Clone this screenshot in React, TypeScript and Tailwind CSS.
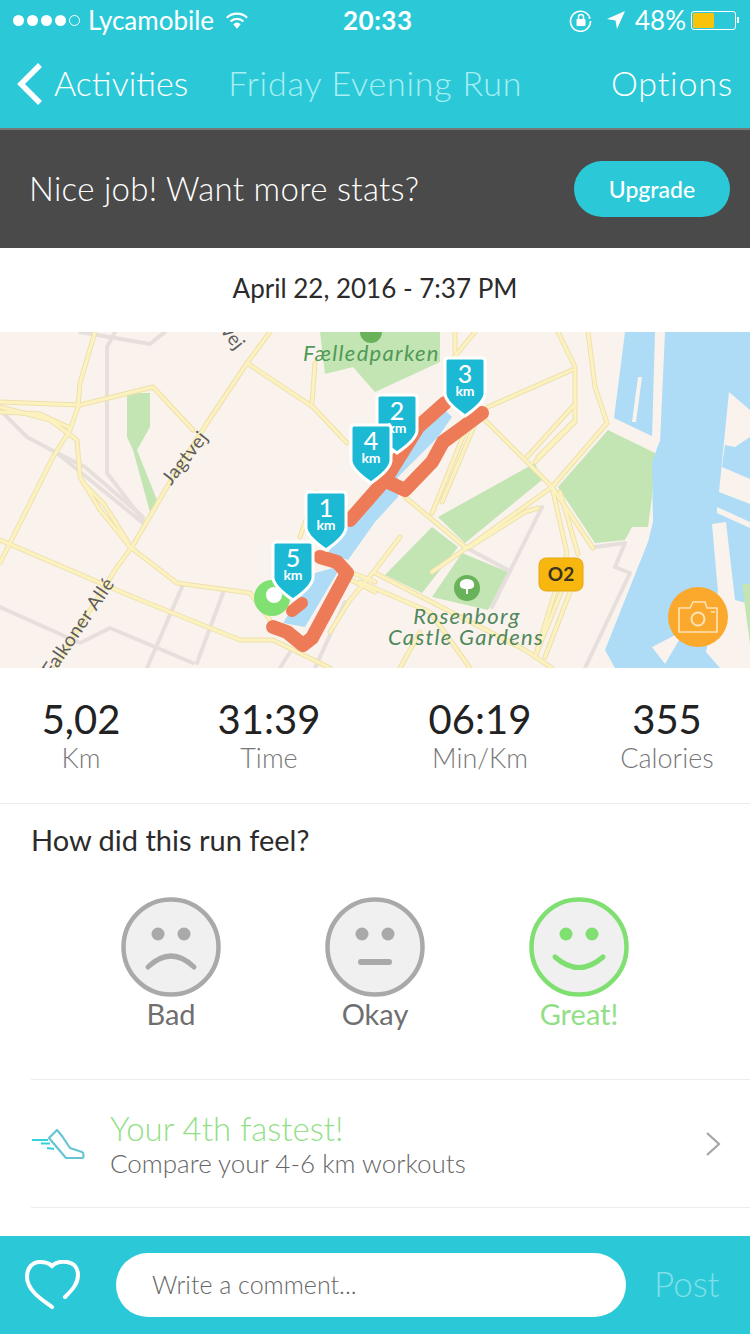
import React from "react";

const roads: string[] = [
  "M95 0L80 51L78 75L70 98L53 125L10 211L0 231",
  "M0 70L80 73L153 55L193 98",
  "M0 80L40 82L68 95",
  "M270 0L247 31L207 91L167 155L132 215L117 235L67 315L55 336",
  "M247 31L313 75L347 111",
  "M0 208L133 265L240 308L273 308L330 336",
  "M0 75L50 88L77 108L80 145L100 178L130 215L177 251L250 261L270 288",
  "M84 152L104 172L128 210",
  "M315 31L312 71",
  "M558 0L575 35L575 88L538 125",
  "M588 0L595 55L607 91L552 155L468 215L432 240",
  "M488 75L572 38",
  "M482 85L552 155L593 216",
  "M552 155L567 221L535 325",
  "M560 160L578 222",
  "M527 125L575 72",
  "M535 130L575 90",
  "M405 165L465 215",
  "M432 181L475 75",
  "M442 170L478 85",
  "M375 241L525 318L552 336",
  "M535 325L562 258",
  "M545 325L570 260",
  "M400 205L375 238L350 268L330 300",
  "M347 180L330 190",
  "M316 160L300 205",
  "M360 250L430 280L470 336",
  "M345 245L375 260",
  "M475 0L450 30",
  "M455 0L455 20",
  "M470 215L525 180L538 176",
  "M400 336L420 300",
  "M350 240L375 250",
];

const grayRoads: string[] = [
  "M0 78L27 105L57 121L143 191",
  "M57 121L85 135L143 185",
  "M107 15L107 141L143 188",
  "M0 275L80 311L110 296L193 331",
  "M182 255L147 336",
  "M223 261L197 331",
  "M595 215L625 211L615 235L630 241L585 336",
  "M465 215L508 238",
  "M542 175L492 275",
  "M115 0L107 15",
  "M80 0L150 12L165 0",
  "M290 320L280 336",
  "M345 270L315 336",
];

const pins = [
  { n: "2", x: 397, y: 63 },
  { n: "3", x: 465, y: 26 },
  { n: "4", x: 371, y: 93 },
  { n: "1", x: 326, y: 160 },
  { n: "5", x: 293, y: 210 },
];

function MapArt() {
  return (
    <svg viewBox="0 0 750 336" className="block h-[336px] w-[750px]">
      <rect width="750" height="336" fill="#faf3ed" />
      <g fill="#c3e4b3">
        <path d="M320 0H440V30L375 60L353 35L325 42Z" />
        <path d="M127 61H150V95L137 118L157 168L150 180L133 118L127 105Z" />
        <path d="M608 98L655 121L652 165L648 195L632 195L625 208L595 211L558 155Z" />
        <path d="M438 185L535 131L542 148L465 211Z" />
        <path d="M385 243L432 195L458 215L422 261Z" />
        <path d="M432 265L462 221L508 240L488 278Z" />
      </g>
      <circle cx="371" cy="0" r="11" fill="#68b25a" />
      <path d="M625 0H750V336H615L605 318L632 250L648 210L653 190L652 130L660 108L614 86Z" fill="#aedcf6" />
      <g fill="#faf3ed">
        <path d="M655 0H665L660 110L652 106Z" />
        <path d="M638 45L642 45L636 90L632 90Z" />
        <path d="M729 60L750 78V105L735 115L725 113L722 135L750 147V172L719 160Z" />
        <path d="M717 175L750 190V196L717 181Z" />
        <path d="M712 192L726 190L735 268L750 272V336H720L706 320L718 260Z" />
        <path d="M652 315L685 298L665 332Z" />
      </g>
      <path d="M742 252H750V312Z" fill="#c3e4b3" />
      <g fill="none" strokeLinejoin="round" strokeLinecap="round">
        {grayRoads.map((d) => (
          <path key={d} d={d} stroke="#e6dfdc" strokeWidth="4" />
        ))}
        {roads.map((d) => (
          <path key={d} d={d} stroke="#eee0ad" strokeWidth="5" />
        ))}
        {roads.map((d) => (
          <path key={d + "i"} d={d} stroke="#fcf2c0" strokeWidth="3" />
        ))}
        <path d="M398 145L438 105L452 85L442 75L418 98L398 125L375 160L340 200L328 221L348 228L375 190L398 165Z" fill="#aedcf6" stroke="none" />
        <path d="M333 236L337 241L305 295L283 291L315 241Z" fill="#aedcf6" stroke="none" />
        <path d="M482 81L462 96L443 110L432 130L405 158L388 150M445 71L418 95L385 148L350 188" stroke="#ee7b57" strokeWidth="14" />
        <path d="M273 295L287 300L303 313L312 306L347 241L337 230L320 225" stroke="#ee7b57" strokeWidth="14" />
        <path d="M292 279L302 271" stroke="#ee7b57" strokeWidth="12" />
      </g>
      <circle cx="272" cy="266" r="18" fill="#80e071" />
      <circle cx="274" cy="263" r="8" fill="#ffffff" />
      {pins.map((p) => (
        <g key={p.n}>
          <path
            d={`M${p.x - 17} ${p.y}H${p.x + 17}Q${p.x + 20} ${p.y} ${p.x + 20} ${p.y + 3}V${p.y + 36}Q${p.x + 19} ${p.y + 45} ${p.x} ${p.y + 58}Q${p.x - 19} ${p.y + 45} ${p.x - 20} ${p.y + 36}V${p.y + 3}Q${p.x - 20} ${p.y} ${p.x - 17} ${p.y}Z`}
            fill="#1cb9d5"
            stroke="#ffffff"
            strokeWidth="3"
          />
          <text x={p.x} y={p.y + 25} textAnchor="middle" fill="#ffffff" fontSize="25" fontWeight="500" fontFamily="Lato, sans-serif">
            {p.n}
          </text>
          <text x={p.x} y={p.y + 38} textAnchor="middle" fill="#ffffff" fontSize="14" fontWeight="700" fontFamily="Lato, sans-serif">
            km
          </text>
        </g>
      ))}
      <g fontFamily="Lato, sans-serif" fontStyle="italic" fontSize="22" fill="#4f9a56" letterSpacing="1.3">
        <text x="303" y="29">Fælledparken</text>
        <text x="467" y="292" textAnchor="middle" fill="#50875c">Rosenborg</text>
        <text x="466" y="313" textAnchor="middle" fill="#50875c">Castle Gardens</text>
      </g>
      <g fontFamily="Lato, sans-serif" fontSize="19" fill="#5d5d5d" letterSpacing="0.5">
        <text transform="translate(171 154) rotate(-52)">Jagtvej</text>
        <text transform="translate(52 345) rotate(-56)">Falkoner Allé</text>
        <text transform="translate(220 -1) rotate(52)">vej</text>
      </g>
      <rect x="539" y="226" width="44" height="33" rx="7" fill="#f8b70e" stroke="#e3a715" />
      <text x="561" y="249" textAnchor="middle" fontSize="19" fontWeight="700" fontFamily="Lato, sans-serif" fill="#3a3320">O2</text>
      <circle cx="467" cy="256" r="13" fill="#68b25a" />
      <path d="M467 247c-5 0-8 3-7 7 1 3 4 3 6 3v5h2v-5c2 0 5 0 6-3 1-4-2-7-7-7Z" fill="#ffffff" />
    </svg>
  );
}

function Face({ tone, mood }: { tone: string; mood: "bad" | "okay" | "great" }) {
  return (
    <svg viewBox="0 0 100 100" className="block h-[100px] w-[100px]">
      <circle cx="50" cy="50" r="47.5" fill="#f0f0f0" stroke={tone} strokeWidth="4.5" />
      <circle cx="37" cy="37" r="6.5" fill={tone} />
      <circle cx="63" cy="37" r="6.5" fill={tone} />
      {mood === "bad" && <path d="M27 70Q50 48 73 70" fill="none" stroke={tone} strokeWidth="5" strokeLinecap="round" />}
      {mood === "okay" && <path d="M36 65H64" fill="none" stroke={tone} strokeWidth="6" strokeLinecap="round" />}
      {mood === "great" && <path d="M26 60Q50 81 74 60" fill="none" stroke={tone} strokeWidth="5" strokeLinecap="round" />}
    </svg>
  );
}

export default function App() {
  return (
    <div className="flex h-[1334px] w-[750px] flex-col overflow-hidden bg-white font-['Lato',sans-serif] text-[#2b2b2b]">
      <header className="h-[128px] bg-[#2bc9d8] text-white">
        <div className="relative flex h-10 items-center pl-[13px] pr-[11px] text-[26px]">
          <div className="flex items-center gap-[3px]">
            {[0, 1, 2, 3].map((i) => (
              <span key={i} className="h-[11px] w-[11px] rounded-full bg-white" />
            ))}
            <span className="h-[11px] w-[11px] rounded-full border border-white" />
          </div>
          <span className="ml-[8px]">Lycamobile</span>
          <svg viewBox="0 0 26 20" className="ml-[11px] h-[19px] w-[24px]">
            <path d="M2 7a16 16 0 0 1 22 0M6 11a10 10 0 0 1 14 0" fill="none" stroke="#ffffff" strokeWidth="2.4" />
            <path d="M9 14a6 6 0 0 1 8 0l-4 5Z" fill="#ffffff" />
          </svg>
          <span className="absolute left-[343px] font-bold tracking-[0.5px]">20:33</span>
          <div className="ml-auto flex items-center">
            <svg viewBox="0 0 24 24" className="h-[24px] w-[24px]">
              <path d="M20 8A10 10 0 1 0 21.5 13" fill="none" stroke="#ffffff" strokeWidth="1.6" />
              <path d="M19 10.5l3 0-1.5-3Z" fill="#ffffff" />
              <rect x="7.5" y="11" width="9" height="7" rx="1" fill="#ffffff" />
              <path d="M9.5 11V9a2.5 2.5 0 0 1 5 0v2" fill="none" stroke="#ffffff" strokeWidth="1.5" />
            </svg>
            <svg viewBox="0 0 20 20" className="ml-[13px] h-[20px] w-[20px]">
              <path d="M19 1L1 9l8.5 1.5L11 19Z" fill="#ffffff" />
            </svg>
            <span className="ml-[9px]">48%</span>
            <div className="ml-[5px] flex items-center">
              <div className="h-[19px] w-[45px] rounded-[3px] border border-white p-[1px]">
                <div className="h-full w-[21px] rounded-[1px] bg-[#f9c30a]" />
              </div>
              <div className="ml-[1px] h-[6px] w-[2px] bg-white" />
            </div>
          </div>
        </div>
        <div className="relative flex h-[88px] items-center text-[34px] font-light">
          <svg viewBox="0 0 28 44" className="ml-[16px] h-[44px] w-[28px]">
            <path d="M24 3L5 22L24 41" fill="none" stroke="#ffffff" strokeWidth="5.5" />
          </svg>
          <span className="ml-[10px] pb-[3px]">Activities</span>
          <span className="ml-[40px] pb-[3px] tracking-[0.8px] text-[#a8eef3]">Friday Evening Run</span>
          <span className="ml-auto mr-[17px] pb-[3px] tracking-[0.8px]">Options</span>
        </div>
      </header>

      <div className="flex h-[120px] items-center justify-between border-t-2 border-[#76797a] bg-[#4a4a4a] pl-[29px] pr-[20px]">
        <span className="text-[33px] font-light tracking-[0.3px] text-white">Nice job! Want more stats?</span>
        <button className="h-[56px] w-[156px] rounded-full bg-[#2bc9d8] text-[23px] font-medium text-white">Upgrade</button>
      </div>

      <div className="flex h-[84px] items-center justify-center pb-[3px] text-[26px]">April 22, 2016 - 7:37 PM</div>

      <div className="relative h-[336px]">
        <MapArt />
        <div className="absolute left-[668px] top-[255px] flex h-[60px] w-[60px] items-center justify-center rounded-full bg-[#fba92d]">
          <svg viewBox="0 0 40 32" className="h-[32px] w-[40px]">
            <path d="M1 7H12L15 1H27L29 7H39V31H1Z" fill="none" stroke="#fde3b8" strokeWidth="1.6" />
            <circle cx="20" cy="18" r="6.5" fill="none" stroke="#fde3b8" strokeWidth="2" />
            <path d="M33 11H37" stroke="#fde3b8" strokeWidth="1.6" />
          </svg>
        </div>
      </div>

      <div className="grid h-[136px] grid-cols-[162px_214px_208px_166px] border-b border-[#ececec] pt-[29px] text-center">
        {[
          ["5,02", "Km"],
          ["31:39", "Time"],
          ["06:19", "Min/Km"],
          ["355", "Calories"],
        ].map(([v, l]) => (
          <div key={l} className="flex flex-col items-center">
            <span className="text-[40px] leading-[44px] text-[#222222]">{v}</span>
            <span className="text-[27px] font-light leading-[34px] text-[#777777]">{l}</span>
          </div>
        ))}
      </div>

      <div className="pl-[31px] pt-[19px] text-[29px] leading-[34px]">How did this run feel?</div>

      <div className="mt-[40px] flex h-[140px] justify-center gap-[104px]">
        {[
          { l: "Bad", t: "#a9a9a9", c: "text-[#6f6f6f]", m: "bad" as const },
          { l: "Okay", t: "#a9a9a9", c: "text-[#6f6f6f]", m: "okay" as const },
          { l: "Great!", t: "#7fe071", c: "text-[#93df87]", m: "great" as const },
        ].map((f) => (
          <div key={f.l} className="flex w-[100px] flex-col items-center">
            <Face tone={f.t} mood={f.m} />
            <span className={`text-[29px] leading-[34px] ${f.c}`}>{f.l}</span>
          </div>
        ))}
      </div>

      <div className="ml-[31px] mt-[42px] flex h-[129px] items-center border-y border-[#ececec]">
        <svg viewBox="0 0 54 32" className="ml-[1px] h-[32px] w-[54px]">
          <path d="M25 2L17 10L34 30H50C52 30 52 25 50 24L38 20L30 8Z" fill="#ffffff" stroke="#66c5d3" strokeWidth="2.2" strokeLinejoin="round" />
          <path d="M0 12H16M9 15.5H18M15 20L22 21" stroke="#33d2da" strokeWidth="2" />
        </svg>
        <div className="ml-[24px] flex flex-col">
          <span className="text-[33px] font-light leading-[38px] text-[#93df87]">Your 4th fastest!</span>
          <span className="text-[26px] font-light leading-[32px] text-[#666666]">Compare your 4-6 km workouts</span>
        </div>
        <svg viewBox="0 0 16 26" className="ml-auto mr-[29px] h-[26px] w-[16px]">
          <path d="M2 2L14 13L2 24" fill="none" stroke="#a5a5a5" strokeWidth="2.2" />
        </svg>
      </div>

      <div className="mt-auto flex h-[98px] items-center bg-[#2bc9d8]">
        <svg viewBox="0 0 58 50" className="ml-[24px] h-[50px] w-[58px]">
          <path d="M28 47C20 41 3 31 3 17C3 7 9 2 16 2C21 2 25 3 28 6C31 3 36 1 43 2C50 3 54 8 54 15C54 24 48 30 41 37" fill="none" stroke="#ffffff" strokeWidth="4" strokeLinecap="round" />
        </svg>
        <div className="ml-[34px] flex h-[64px] w-[510px] items-center rounded-full bg-white pl-[36px] text-[25px] font-light text-[#666666]">Write a comment...</div>
        <span className="ml-[28px] pb-[3px] text-[35px] font-light text-[#80dfe8]">Post</span>
      </div>
    </div>
  );
}
